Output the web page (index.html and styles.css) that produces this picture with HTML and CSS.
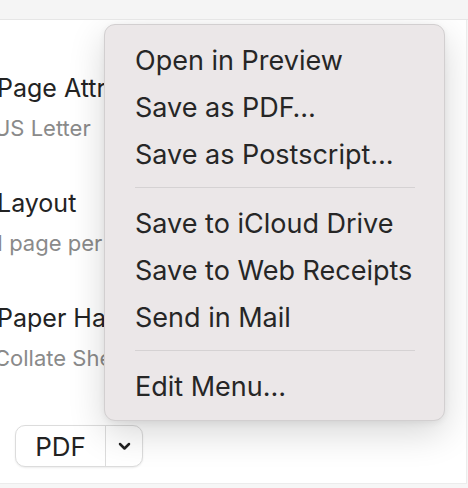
FILE: index.html
```html
<!DOCTYPE html>
<html>
<head>
<meta charset="utf-8">
<link rel="stylesheet" href="styles.css">
</head>
<body>
<div class="topbar"></div>
<div class="panel">
  <div class="settings">
    <div class="group">
      <div class="title">Page Attributes</div>
      <div class="sub">US Letter</div>
    </div>
    <div class="group">
      <div class="title">Layout</div>
      <div class="sub">1 page per sheet</div>
    </div>
    <div class="group">
      <div class="title">Paper Handling</div>
      <div class="sub">Collate Sheets</div>
    </div>
  </div>
  <div class="pdfbtn">
    <span class="pdf-label">PDF</span>
    <span class="pdf-arrow">
      <svg width="13" height="9" viewBox="0 0 13 9"><path d="M2 2 L6.5 6.5 L11 2" fill="none" stroke="#222" stroke-width="2.5" stroke-linecap="round" stroke-linejoin="round"/></svg>
    </span>
  </div>
  <div class="menu">
    <div class="item">Open in Preview</div>
    <div class="item">Save as PDF…</div>
    <div class="item">Save as Postscript…</div>
    <div class="sep"></div>
    <div class="item">Save to iCloud Drive</div>
    <div class="item">Save to Web Receipts</div>
    <div class="item">Send in Mail</div>
    <div class="sep"></div>
    <div class="item">Edit Menu…</div>
  </div>
</div>
</body>
</html>
```
FILE: styles.css
```css
html, body {
  margin: 0;
  padding: 0;
}
body {
  width: 468px;
  height: 488px;
  background: #f6f6f6;
  font-family: Inter, "Noto Sans", sans-serif;
  overflow: hidden;
  position: relative;
}
.topbar {
  height: 19px;
  background: #f5f5f5;
  border-bottom: 1px solid #e6e6e6;
}
.panel {
  position: relative;
  width: 466px;
  height: 463px;
  background: #ffffff;
  border-right: 1px solid #ececec;
  border-bottom: 1px solid #ececec;
  overflow: hidden;
}
.settings {
  padding-top: 53px;
  margin-left: -3px;
  display: flex;
  flex-direction: column;
  gap: 48px;
}
.group {
  display: flex;
  flex-direction: column;
  gap: 13px;
  white-space: nowrap;
}
.title {
  font-size: 25px;
  line-height: 30px;
  color: #232323;
}
.sub {
  margin-left: -3px;
  font-size: 22px;
  line-height: 24px;
  color: #8a8a8a;
}
.pdfbtn {
  position: absolute;
  left: 15px;
  top: 405px;
  width: 126px;
  height: 40px;
  border: 1px solid #dcdcdc;
  border-radius: 10px;
  background: #fff;
  box-shadow: 0 1px 2px rgba(0,0,0,0.08);
  display: flex;
  align-items: stretch;
}
.pdf-label {
  width: 89px;
  border-right: 1px solid #dcdcdc;
  display: flex;
  align-items: center;
  justify-content: center;
  font-size: 26px;
  color: #222;
}
.pdf-arrow {
  flex: 1;
  display: flex;
  align-items: center;
  justify-content: center;
}
.menu {
  position: absolute;
  left: 104px;
  top: 4px;
  width: 339px;
  padding: 12px 0 10px 0;
  background: #ebe7e8;
  border: 1px solid #d2cfd0;
  border-radius: 11px;
  box-shadow: 0 12px 36px rgba(0,0,0,0.16), 0 2px 6px rgba(0,0,0,0.06);
}
.item {
  height: 47px;
  line-height: 47px;
  padding-left: 30px;
  font-size: 27px;
  color: #262626;
  white-space: nowrap;
}
.sep {
  height: 1px;
  background: #d5d2d3;
  margin: 9px 29px 12px 30px;
}
```
